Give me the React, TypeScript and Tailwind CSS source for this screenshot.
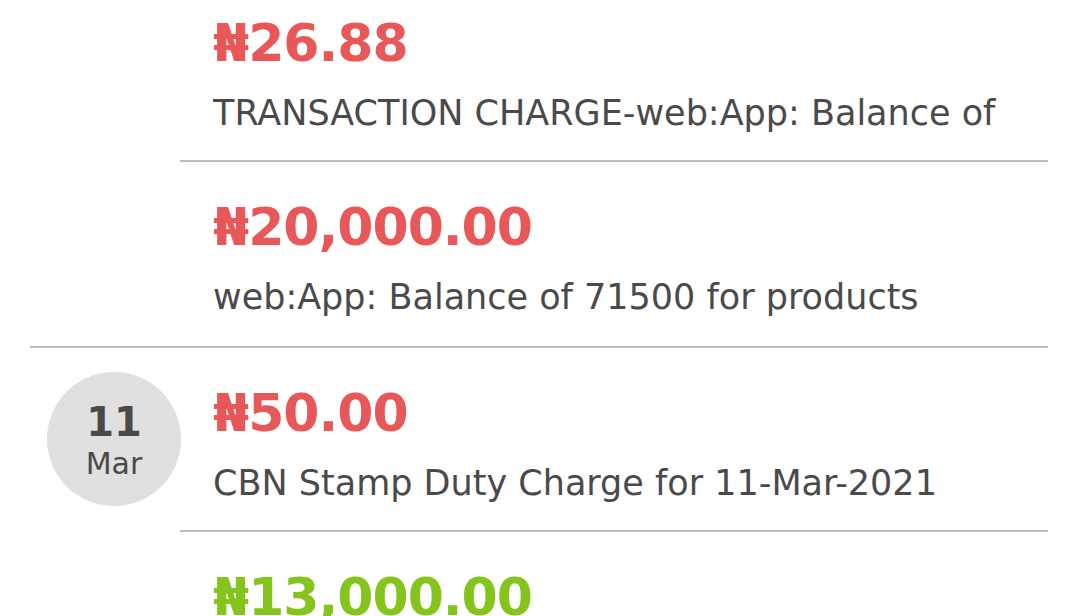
import React from 'react';

type Txn = { amount: string; note?: string; credit?: boolean };
type Day = { day?: string; month?: string; items: Txn[] };

const days: Day[] = [
  {
    items: [
      { amount: '₦26.88', note: 'TRANSACTION CHARGE-web:App: Balance of' },
      { amount: '₦20,000.00', note: 'web:App: Balance of 71500 for products' },
    ],
  },
  {
    day: '11',
    month: 'Mar',
    items: [
      { amount: '₦50.00', note: 'CBN Stamp Duty Charge for 11-Mar-2021' },
      { amount: '₦13,000.00', credit: true },
    ],
  },
];

const font = { fontFamily: '"DejaVu Sans", "Noto Sans", sans-serif' };

const Row: React.FC<{ txn: Txn; last: boolean }> = ({ txn, last }) => (
  <div className={`h-[184px] pl-[33px] pt-[33px] ${last ? '' : 'border-b-2 border-[#bdbdbd]'}`}>
    <div
      className={`text-[52px] leading-[64px] font-bold tracking-[-1px] ${txn.credit ? 'text-[#84c41c]' : 'text-[#e85858]'}`}
    >
      {txn.amount}
    </div>
    {txn.note && (
      <div className="mt-[18px] text-[35px] leading-[40px] text-[#4a4a4a] whitespace-nowrap overflow-hidden">
        {txn.note}
      </div>
    )}
  </div>
);

export default function App() {
  return (
    <div className="w-[1067px] h-[616px] overflow-hidden bg-white" style={font}>
      <div className="-mt-[22px]">
        {days.map((d, i) => (
          <div key={i} className="ml-[30px] mr-[19px] flex border-b-2 border-[#bdbdbd]">
            <div className="w-[150px] shrink-0 pl-[17px]">
              {d.day && (
                <div className="mt-[24px] w-[134px] h-[134px] pt-[2px] rounded-full bg-[#e0e0e0] flex flex-col items-center justify-center text-[#4a4a4a]">
                  <span className="text-[40px] leading-[47px] font-bold">{d.day}</span>
                  <span className="text-[30px] leading-[35px]">{d.month}</span>
                </div>
              )}
            </div>
            <div className="flex-1 min-w-0">
              {d.items.map((t, j) => (
                <Row key={j} txn={t} last={j === d.items.length - 1} />
              ))}
            </div>
          </div>
        ))}
      </div>
    </div>
  );
}
